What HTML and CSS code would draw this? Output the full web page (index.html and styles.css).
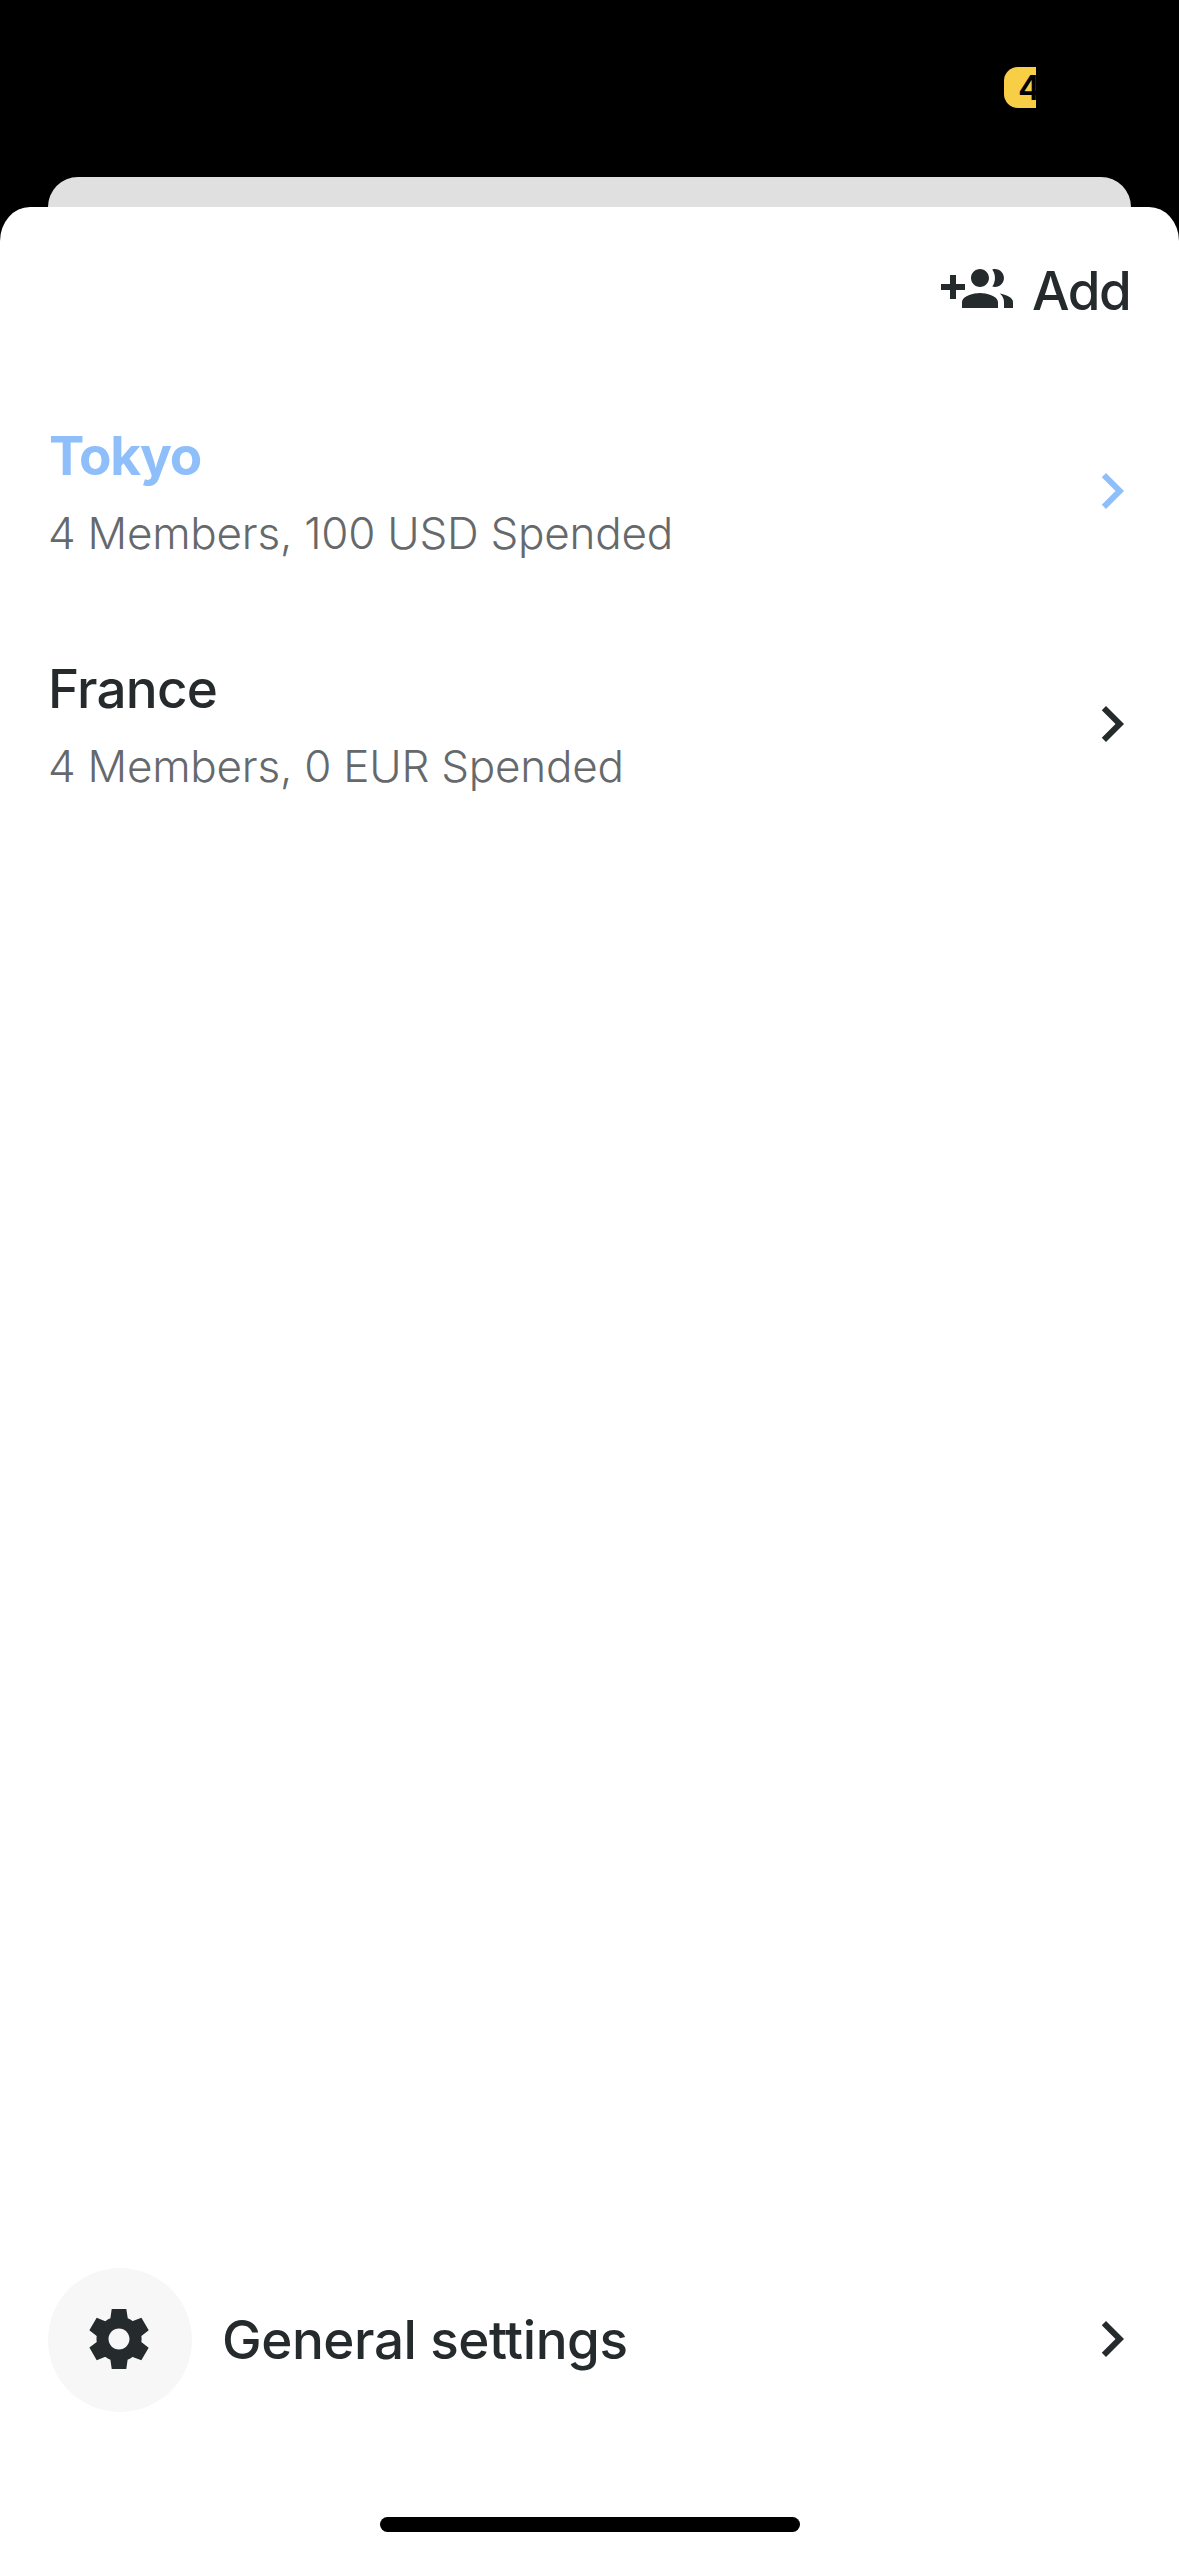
FILE: index.html
```
<!DOCTYPE html>
<html lang="en">
<head>
<meta charset="utf-8">
<title>Groups</title>
<link rel="stylesheet" href="styles.css">
</head>
<body>
<div class="screen">
  <div class="status-bar"><div class="battery"><span class="battery-level">4</span></div></div>
  <div class="back-card"></div>
  <main class="sheet">
    <header class="toolbar">
      <button class="add-button">
        <svg class="icon" viewBox="0 0 24 24"><path d="M8 10H5V7H3v3H0v2h3v3h2v-3h3v-2zm10 1c1.66 0 2.99-1.34 2.99-3S19.66 5 18 5c-.32 0-.63.05-.91.14.57.81.9 1.79.9 2.86s-.34 2.04-.9 2.86c.28.09.59.14.91.14zm-5 0c1.66 0 2.99-1.34 2.99-3S14.66 5 13 5c-1.66 0-3 1.34-3 3s1.34 3 3 3zm6.62 2.16c.83.73 1.38 1.66 1.38 2.84v2h3v-2c0-1.54-2.37-2.49-4.38-2.84zM13 13c-2 0-6 1-6 3v2h12v-2c0-2-4-3-6-3z"/></svg>
        <span class="add-label">Add</span>
      </button>
    </header>
    <section class="groups">
      <div class="row row-active">
        <div class="row-text">
          <div class="title title-active">Tokyo</div>
          <div class="subtitle">4 Members, 100 USD Spended</div>
        </div>
        <svg class="icon arrow" viewBox="0 0 24 24"><path d="M10 6L8.59 7.41 13.17 12l-4.58 4.59L10 18l6-6z"/></svg>
      </div>
      <div class="row">
        <div class="row-text">
          <div class="title">France</div>
          <div class="subtitle">4 Members, 0 EUR Spended</div>
        </div>
        <svg class="icon arrow" viewBox="0 0 24 24"><path d="M10 6L8.59 7.41 13.17 12l-4.58 4.59L10 18l6-6z"/></svg>
      </div>
    </section>
    <footer class="settings">
      <div class="settings-badge">
        <svg class="icon" viewBox="0 0 24 24"><path d="M19.44 12.99l.01-.02c.04-.32.08-.64.08-.98 0-.34-.03-.66-.07-.99l.01.02 2.44-1.92-2.43-4.22-2.87 1.16.01.01c-.52-.4-1.09-.74-1.71-1h.01L14.44 2H9.57l-.44 3.07h.01c-.62.26-1.19.6-1.71 1l.01-.01-2.88-1.17-2.44 4.22 2.44 1.92.01-.02c-.04.33-.07.65-.07.99 0 .34.03.66.08.98l-.01-.02-2.1 1.65-.33.26 2.43 4.2 2.88-1.15-.02-.04c.53.41 1.1.75 1.73 1.01h-.03L9.58 22h4.85s.03-.18.06-.42l.38-2.65h-.01c.62-.26 1.2-.6 1.73-1.01l-.02.04 2.88 1.15 2.43-4.2s-.14-.12-.33-.26l-2.11-1.66zM12 15.5c-1.93 0-3.5-1.57-3.5-3.5s1.57-3.5 3.5-3.5 3.5 1.57 3.5 3.5-1.57 3.5-3.5 3.5z"/></svg>
      </div>
      <span class="settings-label">General settings</span>
      <svg class="icon settings-arrow" viewBox="0 0 24 24"><path d="M10 6L8.59 7.41 13.17 12l-4.58 4.59L10 18l6-6z"/></svg>
    </footer>
    <div class="home-indicator"></div>
  </main>
</div>
</body>
</html>
```
FILE: styles.css
```
* { box-sizing: border-box; }

body {
  margin: 0;
  background: #000;
  color: #252a2c;
  font-family: Inter, "Liberation Sans", sans-serif;
}

.screen {
  width: 1179px;
  height: 2556px;
  display: flex;
  flex-direction: column;
  overflow: hidden;
}

.status-bar {
  height: 177px;
  padding: 67px 143px 0 0;
  display: flex;
  justify-content: flex-end;
}

.battery {
  width: 32px;
  height: 41px;
  padding-left: 14px;
  border-radius: 14px 0 0 14px;
  background: #f7ce46;
  overflow: hidden;
}

.battery-level {
  display: block;
  color: #000;
  font-size: 34px;
  font-weight: 600;
  line-height: 42px;
}

.back-card {
  height: 30px;
  margin: 0 48px;
  border-radius: 30px 30px 0 0;
  background: #e0e0e0;
}

.sheet {
  flex: 1;
  display: flex;
  flex-direction: column;
  border-radius: 30px 30px 0 0 / 34px 34px 0 0;
  background: #fff;
}

.icon {
  display: block;
  flex: none;
  width: 72px;
  height: 72px;
  fill: currentColor;
}

.toolbar {
  height: 168px;
  padding: 47px 49px 0 0;
  display: flex;
  justify-content: flex-end;
  align-items: flex-start;
}

.add-button {
  display: flex;
  align-items: flex-start;
  gap: 19px;
  padding: 0;
  border: 0;
  background: none;
  color: inherit;
  font: 500 53px/72px Inter, "Liberation Sans", sans-serif;
}

.add-label {
  width: 98px;
  padding-top: 1px;
  letter-spacing: -1.4px;
  text-align: left;
  white-space: nowrap;
}

.groups {
  flex: 1;
}

.row {
  height: 233px;
  padding: 0 31px 0 48px;
  display: flex;
  justify-content: space-between;
  align-items: center;
}

.row-active .icon,
.title-active {
  color: #8fbffa;
}

.row-text {
  padding-top: 5px;
  white-space: nowrap;
}

.arrow {
  margin-bottom: 1px;
}

.title {
  font-size: 53px;
  font-weight: 500;
  line-height: 78px;
  letter-spacing: -0.8px;
}

.title-active {
  padding-left: 1px;
  font-weight: 700;
  letter-spacing: -1.3px;
}

.subtitle {
  color: #66696b;
  font-size: 44px;
  font-weight: 300;
  line-height: 76px;
  letter-spacing: -0.24px;
}

.settings {
  height: 144px;
  margin-bottom: 105px;
  padding: 0 31px 0 48px;
  display: flex;
  align-items: center;
}

.settings-badge {
  width: 144px;
  height: 144px;
  padding: 35px;
  border-radius: 50%;
  background: #f7f7f7;
}

.settings-label {
  flex: 1;
  padding-left: 30px;
  font-size: 53px;
  font-weight: 500;
  line-height: 72px;
  letter-spacing: -0.43px;
  white-space: nowrap;
}

.settings-arrow {
  margin-bottom: 2px;
}

.home-indicator {
  width: 420px;
  height: 15px;
  margin: 0 auto 24px;
  border-radius: 8px;
  background: #000;
}
```
